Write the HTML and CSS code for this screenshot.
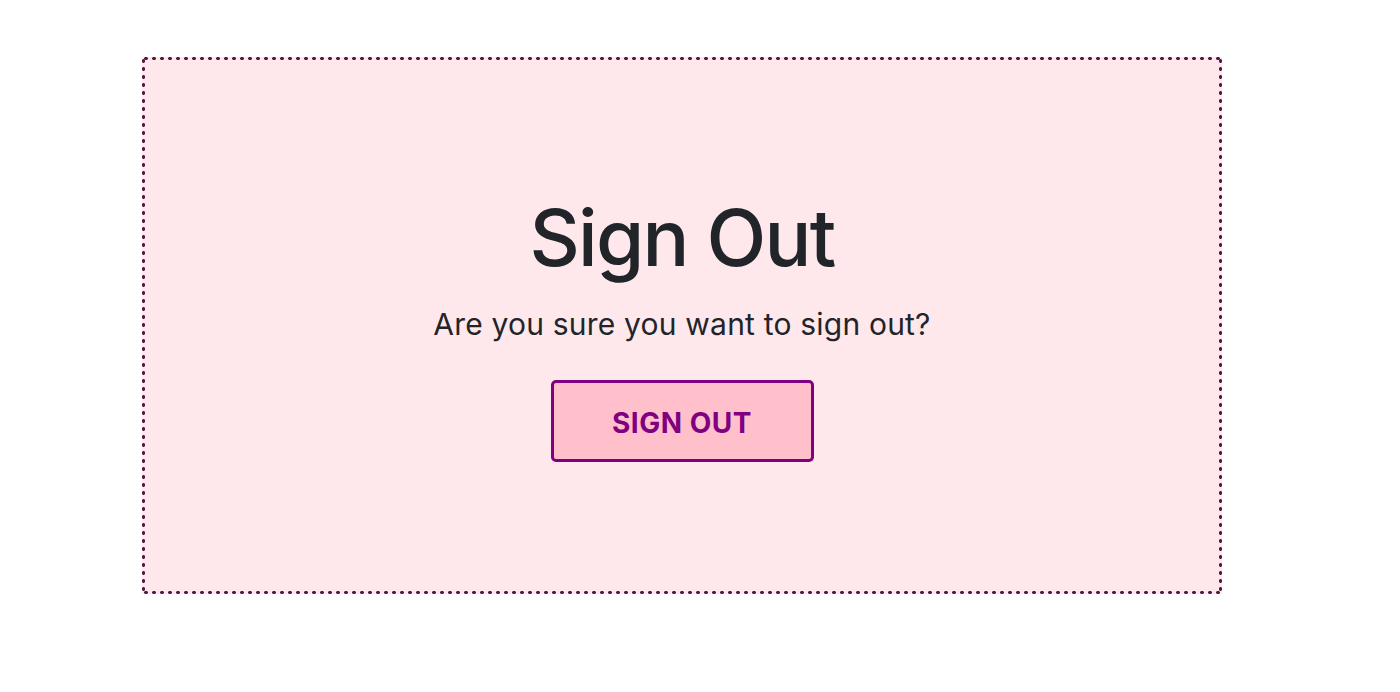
FILE: index.html
```html
<!DOCTYPE html>
<html lang="en">
<head>
<meta charset="utf-8">
<title>Sign Out</title>
<link rel="stylesheet" href="styles.css">
</head>
<body>
  <main class="signout-box">
    <h1 class="signout-title">Sign Out</h1>
    <p class="signout-text">Are you sure you want to sign out?</p>
    <button class="signout-button" type="button">SIGN OUT</button>
  </main>
</body>
</html>
```

FILE: styles.css
```css
html, body {
  margin: 0;
  padding: 0;
  background: #ffffff;
}

body {
  font-family: "Inter", "Noto Sans", sans-serif;
  color: #212529;
}

.signout-box {
  box-sizing: border-box;
  width: 1080px;
  height: 537px;
  margin: 57px 0 0 142px;
  padding-top: 131px;
  border: 3px solid transparent;
  background:
    radial-gradient(circle, #5a1545 1.6px, transparent 2px) left top / 8px 3px round no-repeat,
    radial-gradient(circle, #5a1545 1.6px, transparent 2px) left bottom / 8px 3px round no-repeat,
    radial-gradient(circle, #5a1545 1.6px, transparent 2px) left top / 3px 8px no-repeat round,
    radial-gradient(circle, #5a1545 1.6px, transparent 2px) right top / 3px 8px no-repeat round,
    #ffe8ec;
  background-origin: border-box;
  background-clip: border-box;
  display: flex;
  flex-direction: column;
  align-items: center;
}

.signout-title {
  margin: 0;
  font-size: 78px;
  font-weight: 500;
  line-height: 1.2;
  letter-spacing: -1.8px;
}

.signout-text {
  margin: 17px 0 0;
  font-size: 30px;
  line-height: 1.5;
  letter-spacing: 0.2px;
}

.signout-button {
  box-sizing: border-box;
  width: 263px;
  height: 82px;
  margin-top: 33px;
  padding: 6px 0 0;
  background: #ffc0cb;
  border: 3px solid #800080;
  border-radius: 5px;
  color: #800080;
  font-family: "Inter", "Noto Sans", sans-serif;
  font-size: 28px;
  font-weight: 700;
  line-height: 1.2;
  letter-spacing: 0.5px;
}
```
